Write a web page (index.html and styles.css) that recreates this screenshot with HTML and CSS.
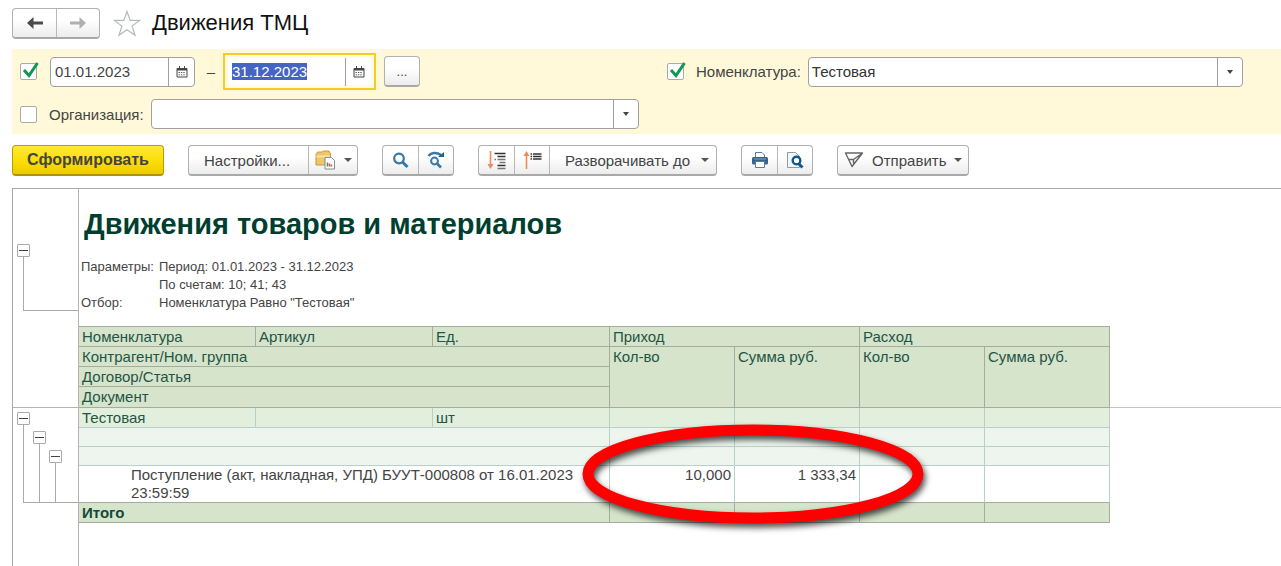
FILE: index.html
```
<!DOCTYPE html>
<html lang="ru">
<head>
    <meta charset="UTF-8">
    <meta name="viewport" content="width=device-width, initial-scale=1.0">
    <title>Движения ТМЦ</title>
    <link rel="stylesheet" href="styles.css">
</head>
<body>
    <header class="titlebar">
        <div class="group nav">
            <button type="button" aria-label="Назад">
                <svg width="18" height="12" viewBox="0 0 18 12"><path d="M1 6 7.500 0v4.500H17v3H7.500V12z" fill="#4a4a4a"/></svg>
            </button>
            <button type="button" aria-label="Вперед">
                <svg width="18" height="12" viewBox="0 0 18 12"><path d="M17 6 10.500 0v4.500H1v3h9.500V12z" fill="#b0b0b0"/></svg>
            </button>
        </div>
        <button class="star" type="button" aria-label="В избранное">
            <svg width="28" height="27" viewBox="0 0 28 27"><path d="M14 1.500l3.200 8.900H26.500l-7.400 5.700 2.900 9.200L14 19.800 6 25.300l2.900-9.200L1.500 10.400h9.300z" fill="#fff" stroke="#b4b8bc" stroke-width="1.200"/></svg>
        </button>
        <h1>Движения ТМЦ</h1>
    </header>

    <form class="filter" action="#" method="get">
        <div class="filter-row">
            <span class="tick">
                <input type="checkbox" aria-label="Период" checked>
                <svg width="20" height="20" viewBox="0 0 20 20"><path d="M4 9l5 5.500L17.500 2" fill="none" stroke="#0f9850" stroke-width="3"/></svg>
            </span>
            <div class="field date">
                <input type="text" id="date-from" aria-label="Начало периода" value="01.01.2023">
                <button type="button" aria-label="Календарь">
                    <svg width="12" height="12" viewBox="0 0 12 12"><path d="M1 2.500h10v8.500H1z" fill="#fff" stroke="#444"/><path d="M1 3.500h10" stroke="#444" stroke-width="2"/><path d="M3.500 0v3M8.500 0v3" stroke="#444"/><path d="M2.500 6.500h7M2.500 8.800h7" stroke="#555" stroke-dasharray="1.400 1"/></svg>
                </button>
            </div>
            <span class="dash">–</span>
            <div class="focus-ring">
                <div class="field date">
                    <input type="text" id="date-to" aria-label="Конец периода" value="31.12.2023">
                    <button type="button" aria-label="Календарь">
                        <svg width="12" height="12" viewBox="0 0 12 12"><path d="M1 2.500h10v8.500H1z" fill="#fff" stroke="#444"/><path d="M1 3.500h10" stroke="#444" stroke-width="2"/><path d="M3.500 0v3M8.500 0v3" stroke="#444"/><path d="M2.500 6.500h7M2.500 8.800h7" stroke="#555" stroke-dasharray="1.400 1"/></svg>
                    </button>
                </div>
            </div>
            <div class="group more">
                <button type="button" aria-label="Выбрать период">...</button>
            </div>
        </div>

        <div class="filter-row">
            <span class="tick">
                <input type="checkbox" aria-label="Отбор по номенклатуре" checked>
                <svg width="20" height="20" viewBox="0 0 20 20"><path d="M4 9l5 5.500L17.500 2" fill="none" stroke="#0f9850" stroke-width="3"/></svg>
            </span>
            <label for="item">Номенклатура:</label>
            <div class="field combo">
                <select id="item">
                    <option>Тестовая</option>
                </select>
                <span class="arrow"></span>
            </div>
        </div>

        <div class="filter-row">
            <span class="tick">
                <input type="checkbox" aria-label="Отбор по организации">
                <svg width="20" height="20" viewBox="0 0 20 20"><path d="M4 9l5 5.500L17.500 2" fill="none" stroke="#0f9850" stroke-width="3"/></svg>
            </span>
            <label for="org">Организация:</label>
            <div class="field combo">
                <select id="org">
                    <option></option>
                </select>
                <span class="arrow"></span>
            </div>
        </div>
    </form>

    <div class="toolbar">
        <button class="primary" type="button">Сформировать</button>
        <div class="group">
            <button class="text" type="button">Настройки...</button>
            <button class="menu" type="button" aria-label="Варианты настроек">
                <svg width="21" height="20" viewBox="0 0 21 20">
                    <path d="M1 4.500 2.500 2H7l1.500-1H14l1.500 3V15H1z" fill="#eec568" stroke="#c69a3c"/>
                    <path d="M1.500 6.500H15" stroke="#fae3a4" stroke-width="2"/>
                    <path d="M10 7.500h6.500l3 3v8.500H10z" fill="#fff" stroke="#7d8da0"/>
                    <path d="M12.500 16.500v-4" stroke="#3a9a55" stroke-width="1.500"/>
                    <path d="M14.500 16.500v-3M16.500 16.500v-2" stroke="#d0503c" stroke-width="1.500"/>
                </svg>
                <span class="caret"></span>
            </button>
        </div>
        <div class="group">
            <button class="icon" type="button" aria-label="Найти">
                <svg width="18" height="18" viewBox="0 0 18 18"><circle cx="7" cy="7.500" r="4.800" fill="none" stroke="#3678a8" stroke-width="2.200"/><path d="M10.500 11l5 5" stroke="#3678a8" stroke-width="3"/></svg>
            </button>
            <button class="icon" type="button" aria-label="Найти далее">
                <svg width="18" height="18" viewBox="0 0 18 18"><circle cx="7.500" cy="10" r="3.400" fill="none" stroke="#3678a8" stroke-width="2"/><path d="M10 12.500l4 4" stroke="#3678a8" stroke-width="2.600"/><path d="M1.500 5C4 1.500 9.500.800 14 4" fill="none" stroke="#3678a8" stroke-width="2.400"/><path d="M11 6h6V1z" fill="#245f8c"/></svg>
            </button>
        </div>
        <div class="group">
            <button class="icon" type="button" aria-label="Развернуть">
                <svg width="19" height="19" viewBox="0 0 19 19"><path d="M3.500 0v14" stroke="#ec8a5c" stroke-width="1.600"/><path d="M.500 13h6l-3 5z" fill="#ec8a5c"/><path d="M7.500 2.500h11M10.500 5.500h8M10.500 14.500h8" stroke="#333" stroke-width="1.300"/><path d="M7.500 8.500h1.500M10.500 8.500h8M12.500 11.500h6M10.500 17.500h8" stroke="#777" stroke-width="1.300"/></svg>
            </button>
            <button class="icon" type="button" aria-label="Свернуть">
                <svg width="19" height="19" viewBox="0 0 19 19"><path d="M3.500 18V4" stroke="#ec8a5c" stroke-width="1.600"/><path d="M.500 5h6l-3-5z" fill="#ec8a5c"/><path d="M7.500 3h1.500M10 3h8.500M7.500 5.500h1.500M10 5.500h8.500M7.500 8h1.500M10 8h8.500" stroke="#333" stroke-width="1.300"/></svg>
            </button>
            <button class="text expand" type="button">Разворачивать до <span class="caret"></span></button>
        </div>
        <div class="group">
            <button class="icon" type="button" aria-label="Печать">
                <svg width="18" height="18" viewBox="0 0 18 18"><path d="M4.500 6V1.500H11l2.500 2.500V6" fill="#fff" stroke="#5a7d9c"/><rect x="1" y="6" width="16" height="7.500" rx="1.500" fill="#34648c"/><path d="M3 8h12" stroke="#7fa4c2"/><path d="M4.500 10.500h9v6h-9z" fill="#fff" stroke="#5a7d9c"/></svg>
            </button>
            <button class="icon" type="button" aria-label="Просмотр">
                <svg width="18" height="18" viewBox="0 0 18 18"><path d="M1.500 1.500h8l4 4v11h-12z" fill="#f4f7fa" stroke="#8b9aa8"/><circle cx="10.500" cy="9.500" r="3.800" fill="#fff" stroke="#0f5a8c" stroke-width="2.400"/><path d="M12.500 12.500l4 4" stroke="#0f5a8c" stroke-width="3"/></svg>
            </button>
        </div>
        <div class="group">
            <button class="send" type="button">
                <svg width="20" height="18" viewBox="0 0 20 18"><path d="M1.500 2h17L8 15.500zM4.500 8.500h5v4M9.500 8.500 18.500 2" fill="none" stroke="#666" stroke-width="1.400" stroke-linejoin="round"/></svg>
                Отправить
                <span class="caret"></span>
            </button>
        </div>
    </div>

    <main class="report">
        <div class="gutter">
            <div class="gutter-head">
                <div class="tree">
                    <div class="branch"><button type="button" aria-label="Свернуть группу"></button></div>
                </div>
            </div>
            <div class="gutter-body">
                <div class="tree">
                    <div class="branch"><button type="button" aria-label="Свернуть уровень 1"></button></div>
                    <div class="branch level-2"><button type="button" aria-label="Свернуть уровень 2"></button></div>
                    <div class="branch level-3"><button type="button" aria-label="Свернуть уровень 3"></button></div>
                </div>
            </div>
        </div>

        <div class="sheet">
            <h2>Движения товаров и материалов</h2>
            <dl class="params">
                <dt>Параметры:</dt>
                <dd>Период: 01.01.2023 - 31.12.2023</dd>
                <dd>По счетам: 10; 41; 43</dd>
                <dt>Отбор:</dt>
                <dd>Номенклатура Равно "Тестовая"</dd>
            </dl>

            <div class="table-area">
                <table>
                    <colgroup>
                        <col class="wide"><col class="wide"><col class="wide">
                        <col><col><col><col>
                    </colgroup>
                    <thead>
                        <tr>
                            <th>Номенклатура</th>
                            <th>Артикул</th>
                            <th>Ед.</th>
                            <th colspan="2">Приход</th>
                            <th colspan="2">Расход</th>
                        </tr>
                        <tr>
                            <th colspan="3">Контрагент/Ном. группа</th>
                            <th rowspan="3">Кол-во</th>
                            <th rowspan="3">Сумма руб.</th>
                            <th rowspan="3">Кол-во</th>
                            <th rowspan="3">Сумма руб.</th>
                        </tr>
                        <tr>
                            <th colspan="3">Договор/Статья</th>
                        </tr>
                        <tr>
                            <th colspan="3">Документ</th>
                        </tr>
                    </thead>
                    <tbody>
                        <tr class="item">
                            <td>Тестовая</td>
                            <td></td>
                            <td>шт</td>
                            <td></td>
                            <td></td>
                            <td></td>
                            <td></td>
                        </tr>
                        <tr class="sub">
                            <td colspan="3"></td>
                            <td></td>
                            <td></td>
                            <td></td>
                            <td></td>
                        </tr>
                        <tr class="sub">
                            <td colspan="3"></td>
                            <td></td>
                            <td></td>
                            <td></td>
                            <td></td>
                        </tr>
                        <tr class="doc">
                            <td colspan="3">Поступление (акт, накладная, УПД) БУУТ-000808 от 16.01.2023 23:59:59</td>
                            <td class="num">10,000</td>
                            <td class="num">1 333,34</td>
                            <td class="num"></td>
                            <td class="num"></td>
                        </tr>
                    </tbody>
                    <tfoot>
                        <tr>
                            <td colspan="3">Итого</td>
                            <td></td>
                            <td></td>
                            <td></td>
                            <td></td>
                        </tr>
                    </tfoot>
                </table>
                <div class="freeze-line"></div>
                <svg class="marker" width="360" height="116" viewBox="0 0 360 116"><ellipse cx="176" cy="54" rx="165" ry="44" fill="none" stroke="#f00" stroke-width="11"/></svg>
            </div>
        </div>
    </main>

    <script>
        document.getElementById("date-to").select();
    </script>
</body>
</html>
```
FILE: styles.css
```
* {
    box-sizing: border-box;
}

body {
    margin: 0;
    min-height: 100vh;
    display: flex;
    flex-direction: column;
    padding-left: 12px;
    background-color: #fff;
    color: #444;
    font-family: "Liberation Sans", Arial, sans-serif;
    font-size: 15px;
}

button, input, select {
    font: inherit;
    color: inherit;
    margin: 0;
    padding: 0;
    border: none;
    background: none;
    outline: none;
}

svg {
    display: block;
    flex: none;
}

/* title */
.titlebar {
    display: flex;
    align-items: center;
    height: 49px;
    padding-bottom: 3px;
}

h1 {
    margin: 0 0 0 11px;
    font-size: 22px;
    font-weight: normal;
    color: #111;
}

.nav button {
    width: 43px;
}

.star {
    margin-left: 13px;
}

/* buttons joined in one frame */
.group {
    display: flex;
    height: 31px;
    border: 1px solid #b0b0b0;
    border-bottom: 2px solid #a8a8a8;
    border-radius: 4px;
    background: linear-gradient(#fff 40%, #ececec);
}

.group button {
    display: flex;
    align-items: center;
    justify-content: center;
    white-space: nowrap;
}

.group button + button {
    border-left: 1px solid #b8b8b8;
}

.caret {
    border: 4px solid transparent;
    border-top-color: #555;
    border-bottom: none;
}

/* filter */
.filter {
    display: grid;
    grid-template-columns: 1fr 576px;
    column-gap: 28px;
    row-gap: 9px;
    padding: 4px 38px 5px 8px;
    background-color: #fff9d9;
}

.filter-row {
    display: flex;
    align-items: center;
}

.filter-row label {
    margin: 0 7px 0 12px;
}

.tick {
    display: grid;
    width: 17px;
    height: 17px;
}

.tick input, .tick svg {
    grid-area: 1 / 1;
}

.tick input {
    appearance: none;
    width: 17px;
    height: 17px;
    border: 1px solid #aaa;
    border-radius: 2px;
    background-color: #fff;
}

.tick svg {
    visibility: hidden;
    margin-top: -2px;
    pointer-events: none;
}

.tick input:checked + svg {
    visibility: visible;
}

.field {
    display: flex;
    height: 30px;
    border: 1px solid #a0a0a0;
    border-radius: 4px;
    background-color: #fff;
}

.date {
    width: 145px;
    margin-left: 13px;
    align-items: center;
}

.date input {
    flex: 1;
    min-width: 0;
    height: 19px;
    padding-left: 4px;
}

.date input::selection {
    background-color: #4565c4;
    color: #fff;
}

.date button {
    display: flex;
    align-items: center;
    justify-content: center;
    width: 26px;
    height: 28px;
    border-left: 1px solid #a0a0a0;
}

.dash {
    width: 28px;
    text-align: center;
    padding-left: 4px;
}

.focus-ring {
    border: 2px solid #f3cd26;
    padding: 3px;
    height: 37px;
    background-color: #fffbe0;
}

.focus-ring .date {
    width: 143px;
    margin-left: 0;
    height: 27px;
    border: none;
}

.more {
    margin-left: 8px;
}

.more button {
    width: 34px;
    font-size: 13px;
}

.combo {
    flex: 1;
    display: grid;
    grid-template-columns: 1fr 25px;
}

.combo select {
    grid-area: 1 / 1 / 2 / 3;
    appearance: none;
    padding-left: 3px;
    color: #333;
}

.arrow {
    grid-area: 1 / 2;
    display: flex;
    align-items: center;
    justify-content: center;
    border-left: 1px solid #a0a0a0;
    pointer-events: none;
}

.arrow::after {
    content: "";
    border: 3px solid transparent;
    border-top: 4px solid #444;
    border-bottom: none;
}

/* toolbar */
.toolbar {
    display: flex;
    gap: 24px;
    padding: 11px 0 12px;
}

.primary {
    width: 152px;
    height: 31px;
    border: 1px solid #b5a000;
    border-bottom: 2px solid #a89500;
    border-radius: 4px;
    background: linear-gradient(#ffe83a, #fbdc00 60%, #ecca00);
    font-size: 16px;
    font-weight: bold;
}

.toolbar .text {
    padding: 0 18px 0 15px;
}

.toolbar .expand {
    gap: 11px;
    padding-right: 7px;
}

.toolbar .menu {
    width: 49px;
    gap: 8px;
}

.toolbar .icon {
    width: 35px;
}

.toolbar .send {
    gap: 8px;
    padding: 0 6px;
}

/* report */
.report {
    flex: 1;
    display: flex;
    border-top: 1px solid #a8a8a8;
    border-left: 1px solid #a8a8a8;
}

.gutter {
    width: 66px;
    border-right: 1px solid #b4b4b4;
}

.gutter-head {
    height: 219px;
    padding: 55px 0 0 10px;
    border-bottom: 1px solid #b4b4b4;
}

.gutter-body {
    padding: 4px 0 0 10px;
}

.tree {
    display: flex;
    gap: 3px;
    border-bottom: 1px solid #aaa;
}

.gutter-head .tree {
    height: 67px;
}

.gutter-body .tree {
    height: 91px;
}

.branch {
    display: flex;
    flex-direction: column;
    align-items: center;
    width: 13px;
}

.branch:first-child {
    margin-left: -6px;
}

.branch::after {
    content: "";
    flex: 1;
    width: 1px;
    background-color: #aaa;
}

.level-2 {
    padding-top: 19px;
}

.level-3 {
    padding-top: 38px;
}

.branch button {
    display: flex;
    align-items: center;
    justify-content: center;
    width: 13px;
    height: 13px;
    border: 1px solid #aaa;
    border-radius: 1px;
}

.branch button::after {
    content: "";
    width: 9px;
    height: 1px;
    background-color: #444;
}

.sheet {
    flex: 1;
    min-width: 0;
    padding-top: 18px;
}

h2 {
    margin: 0;
    padding-left: 5px;
    font-size: 29px;
    line-height: 34px;
    color: #003f2f;
}

.params {
    display: grid;
    grid-template-columns: 78px 1fr;
    margin: 0;
    padding: 17px 0 14px 2px;
    font-size: 13px;
    line-height: 18px;
}

.params dt {
    grid-column: 1;
}

.params dd {
    grid-column: 2;
    margin: 0;
}

.table-area {
    position: relative;
    display: flex;
    color: #1f5547;
}

table {
    table-layout: fixed;
    width: 1030px;
    border-collapse: separate;
    border-spacing: 0;
    border-top: 1px solid #a5aca0;
    font-size: 15px;
    line-height: 18px;
}

col {
    width: 125px;
}

col.wide {
    width: 177px;
}

th, td {
    height: 20px;
    padding: 1px 3px 0;
    border-right: 1px solid #a5aca0;
    border-bottom: 1px solid #a5aca0;
    text-align: left;
    vertical-align: top;
    font-weight: normal;
}

th {
    background-color: #d6e4cb;
}

thead tr:last-child th {
    height: 21px;
}

tbody td {
    border-color: #b9d0c8;
}

.item td {
    background-color: #e1efdc;
}

.sub td {
    height: 19px;
    background-color: #eef5ee;
}

.doc td {
    height: 37px;
    padding-top: 0;
    border-bottom-color: #a5aca0;
    color: #444;
}

.doc td:first-child {
    padding-left: 52px;
    padding-right: 16px;
}

.doc .num {
    text-align: right;
}

tfoot td {
    background-color: #d6e4cb;
}

tfoot td:first-child {
    font-weight: bold;
    color: #0f4a3a;
}

/* edge of the frozen header, continues to the right of the table */
.freeze-line {
    flex: 1;
    height: 82px;
    border-bottom: 1px solid #c4c4c4;
}

/* red mark over the amounts */
.marker {
    position: absolute;
    left: 498px;
    top: 94px;
    filter: drop-shadow(2px 4px 3px rgba(0, 0, 0, 0.7));
    pointer-events: none;
}
```
